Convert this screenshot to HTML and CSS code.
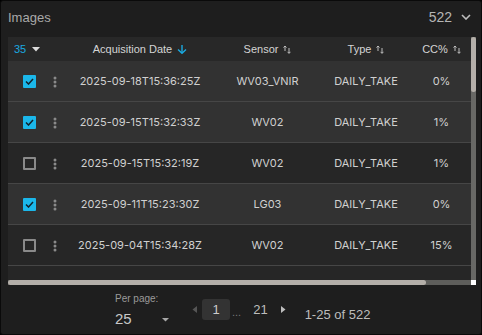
FILE: index.html
```html
<!DOCTYPE html>
<html lang="en">
<head>
    <meta charset="UTF-8">
    <title>Images</title>
    <link rel="stylesheet" href="styles.css">
</head>
<body>
    <div class="panel">
        <div class="panel-head">
            <span class="title">Images</span>
            <span class="count">522
                <svg width="10" height="6" viewBox="0 0 10 6"><polyline points="1,1 5,5 9,1" fill="none" stroke="#bdbdbd" stroke-width="1.6"/></svg>
            </span>
        </div>

        <div class="grid-wrap">
            <div class="table">
                <!-- header -->
                <div class="row head">
                    <div class="sel-count">35 <svg width="8" height="5" viewBox="0 0 8 5"><polygon points="0,0 8,0 4,4.5" fill="#dcdcdc"/></svg></div>
                    <div class="th"><span>Acquisition Date</span>
                        <svg width="10" height="9" viewBox="0 0 10 9"><line x1="5" y1="0" x2="5" y2="8" stroke="#1aa9e0" stroke-width="1.4"/><polyline points="1,4.5 5,8.3 9,4.5" fill="none" stroke="#1aa9e0" stroke-width="1.4"/></svg>
                    </div>
                    <div class="th"><span>Sensor</span><svg class="sort" width="8" height="9" viewBox="0 0 8 9"><line x1="2" y1="1" x2="2" y2="6" stroke="#bdbdbd"/><polyline points="0.5,2.5 2,1 3.5,2.5" fill="none" stroke="#bdbdbd"/><line x1="6" y1="3" x2="6" y2="8.3" stroke="#bdbdbd"/><polyline points="4.5,6.8 6,8.3 7.5,6.8" fill="none" stroke="#bdbdbd"/></svg></div>
                    <div class="th"><span>Type</span><svg class="sort" width="8" height="9" viewBox="0 0 8 9"><line x1="2" y1="1" x2="2" y2="6" stroke="#bdbdbd"/><polyline points="0.5,2.5 2,1 3.5,2.5" fill="none" stroke="#bdbdbd"/><line x1="6" y1="3" x2="6" y2="8.3" stroke="#bdbdbd"/><polyline points="4.5,6.8 6,8.3 7.5,6.8" fill="none" stroke="#bdbdbd"/></svg></div>
                    <div class="th"><span>CC%</span><svg class="sort" width="8" height="9" viewBox="0 0 8 9"><line x1="2" y1="1" x2="2" y2="6" stroke="#bdbdbd"/><polyline points="0.5,2.5 2,1 3.5,2.5" fill="none" stroke="#bdbdbd"/><line x1="6" y1="3" x2="6" y2="8.3" stroke="#bdbdbd"/><polyline points="4.5,6.8 6,8.3 7.5,6.8" fill="none" stroke="#bdbdbd"/></svg></div>
                </div>

                <div class="row item selected">
                    <div class="cell-check"><span class="check on"><svg width="9" height="7" viewBox="0 0 9 7"><polyline points="1,3.5 3.5,6 8,1" fill="none" stroke="#10222c" stroke-width="1.5"/></svg></span></div>
                    <div class="kebab"><svg width="4" height="12" viewBox="0 0 4 12"><circle cx="2" cy="2" r="1.5"/><circle cx="2" cy="6" r="1.5"/><circle cx="2" cy="10" r="1.5"/></svg></div>
                    <div class="td">2025-09-18T15:36:25Z</div>
                    <div class="td">WV03_VNIR</div>
                    <div class="td">DAILY_TAKE</div>
                    <div class="td">0%</div>
                </div>

                <div class="row item selected">
                    <div class="cell-check"><span class="check on"><svg width="9" height="7" viewBox="0 0 9 7"><polyline points="1,3.5 3.5,6 8,1" fill="none" stroke="#10222c" stroke-width="1.5"/></svg></span></div>
                    <div class="kebab"><svg width="4" height="12" viewBox="0 0 4 12"><circle cx="2" cy="2" r="1.5"/><circle cx="2" cy="6" r="1.5"/><circle cx="2" cy="10" r="1.5"/></svg></div>
                    <div class="td">2025-09-15T15:32:33Z</div>
                    <div class="td">WV02</div>
                    <div class="td">DAILY_TAKE</div>
                    <div class="td">1%</div>
                </div>

                <div class="row item">
                    <div class="cell-check"><span class="check"></span></div>
                    <div class="kebab"><svg width="4" height="12" viewBox="0 0 4 12"><circle cx="2" cy="2" r="1.5"/><circle cx="2" cy="6" r="1.5"/><circle cx="2" cy="10" r="1.5"/></svg></div>
                    <div class="td">2025-09-15T15:32:19Z</div>
                    <div class="td">WV02</div>
                    <div class="td">DAILY_TAKE</div>
                    <div class="td">1%</div>
                </div>

                <div class="row item selected">
                    <div class="cell-check"><span class="check on"><svg width="9" height="7" viewBox="0 0 9 7"><polyline points="1,3.5 3.5,6 8,1" fill="none" stroke="#10222c" stroke-width="1.5"/></svg></span></div>
                    <div class="kebab"><svg width="4" height="12" viewBox="0 0 4 12"><circle cx="2" cy="2" r="1.5"/><circle cx="2" cy="6" r="1.5"/><circle cx="2" cy="10" r="1.5"/></svg></div>
                    <div class="td">2025-09-11T15:23:30Z</div>
                    <div class="td">LG03</div>
                    <div class="td">DAILY_TAKE</div>
                    <div class="td">0%</div>
                </div>

                <div class="row item">
                    <div class="cell-check"><span class="check"></span></div>
                    <div class="kebab"><svg width="4" height="12" viewBox="0 0 4 12"><circle cx="2" cy="2" r="1.5"/><circle cx="2" cy="6" r="1.5"/><circle cx="2" cy="10" r="1.5"/></svg></div>
                    <div class="td">2025-09-04T15:34:28Z</div>
                    <div class="td">WV02</div>
                    <div class="td">DAILY_TAKE</div>
                    <div class="td">15%</div>
                </div>

                <!-- next row, scrolled mostly out of view -->
                <div class="row item">
                    <div class="cell-check"><span class="check"></span></div>
                </div>
            </div>

            <div class="vscroll"><div class="vthumb"></div></div>
            <div class="hscroll"><div class="hthumb"></div></div>
            <div class="corner"></div>
        </div>

        <div class="footer">
            <div class="perpage">
                <div class="pp-label">Per page:</div>
                <div class="pp-select">
                    <span>25</span>
                    <svg width="7" height="4" viewBox="0 0 7 4"><polygon points="0,0 7,0 3.5,3.5" fill="#a8a8a8"/></svg>
                </div>
            </div>
            <div class="pager">
                <svg class="arrow" width="5" height="7" viewBox="0 0 5 7"><polygon points="5,0 5,7 0.5,3.5" fill="#555"/></svg>
                <span class="page current">1</span>
                <span class="dots">...</span>
                <span class="page">21</span>
                <svg class="arrow next" width="5" height="7" viewBox="0 0 5 7"><polygon points="0,0 0,7 4.5,3.5" fill="#bdbdbd"/></svg>
            </div>
            <div class="range">1-25 of 522</div>
        </div>
    </div>
</body>
</html>
```
FILE: styles.css
```css
/* Page */
body {
    margin: 0;
    background: #000000;
    font-family: 'Liberation Sans', Arial, sans-serif;
}

.panel {
    width: 482px;
    height: 335px;
    box-sizing: border-box;
    border: 1px solid #0a0a0a;
    border-radius: 3px;
    background: #1e1e1e;
    padding: 0 5px 0 7px;
    display: flex;
    flex-direction: column;
}

/* Title bar */
.panel-head {
    height: 36px;
    display: flex;
    align-items: center;
    justify-content: space-between;
}

.title {
    font-size: 13px;
    color: #a9a9a9;
    margin-top: -3px;
}

.count {
    font-size: 14px;
    color: #b5b5b5;
    display: flex;
    align-items: center;
    gap: 9px;
    padding-right: 5px;
    margin-top: -5px;
}

/* Table + fake scrollbars */
.grid-wrap {
    display: grid;
    grid-template-columns: 463px 5px;
    grid-template-rows: 243px 5px;
}

.table {
    overflow: hidden;
    background: #262626;
}

.row {
    display: grid;
    grid-template-columns: 37px 20px 150px 105px 92px 1fr;
    align-items: center;
}

.row.head {
    height: 24px;
    background: #282828;
    font-size: 11px;
    color: #d4d4d4;
}

.sel-count {
    grid-column: 1 / 3;
    padding-left: 6px;
    color: #1aa9e0;
    display: flex;
    align-items: center;
    gap: 6px;
}

.th {
    display: flex;
    align-items: center;
    justify-content: center;
    gap: 5px;
}

.th .sort {
    margin-top: 1px;
}

.row.item {
    height: 40px;
    border-bottom: 1px solid #464646;
    font-family: Inter, 'Liberation Sans', sans-serif;
    font-size: 11px;
    color: #d0d0d0;
}

.row.item.selected {
    background: #323232;
}

.cell-check {
    padding-left: 15px;
    display: flex;
}

.check {
    width: 13px;
    height: 13px;
    box-sizing: border-box;
    border: 2px solid #8a8a8a;
    border-radius: 1px;
    display: flex;
    align-items: center;
    justify-content: center;
}

.check.on {
    border: none;
    background: #1bb7ea;
}

.kebab {
    display: flex;
    justify-content: center;
    fill: #8a8a8a;
    margin-top: 1px;
}

.td {
    text-align: center;
}

.vscroll {
    background: #686865;
}

.vthumb {
    height: 55px;
    background: #b4afa9;
    border-radius: 3px;
}

.hscroll {
    background: #5e5e5b;
}

.hthumb {
    width: 418px;
    height: 5px;
    background: #b4afa9;
    border-radius: 3px;
}

.corner {
    background: #ffffff;
}

/* Footer */
.footer {
    display: flex;
    align-items: flex-start;
    padding: 8px 0 0 107px;
}

.perpage {
    width: 55px;
}

.pp-label {
    font-size: 10px;
    line-height: 12px;
    color: #9a9a9a;
}

.pp-select {
    margin-top: 5px;
    display: flex;
    align-items: center;
    justify-content: space-between;
    font-size: 15px;
    line-height: 18px;
    color: #c8c8c8;
}

.pp-select svg {
    margin-top: 2px;
    margin-right: 1px;
}

.pager {
    margin: 6px 0 0 22px;
    display: flex;
    align-items: center;
    font-size: 13px;
    color: #bdbdbd;
}

.page.current {
    width: 28px;
    height: 21px;
    margin-left: 5px;
    background: #333333;
    border-radius: 3px;
    display: flex;
    align-items: center;
    justify-content: center;
    color: #cccccc;
}

.dots {
    font-size: 11px;
    color: #777777;
    margin: 5px 0 0 2px;
}

.page {
    margin-left: 12px;
}

.arrow.next {
    margin-left: 13px;
}

.range {
    margin: 14px 0 0 19px;
    font-size: 13px;
    line-height: 16px;
    color: #bdbdbd;
}
```
